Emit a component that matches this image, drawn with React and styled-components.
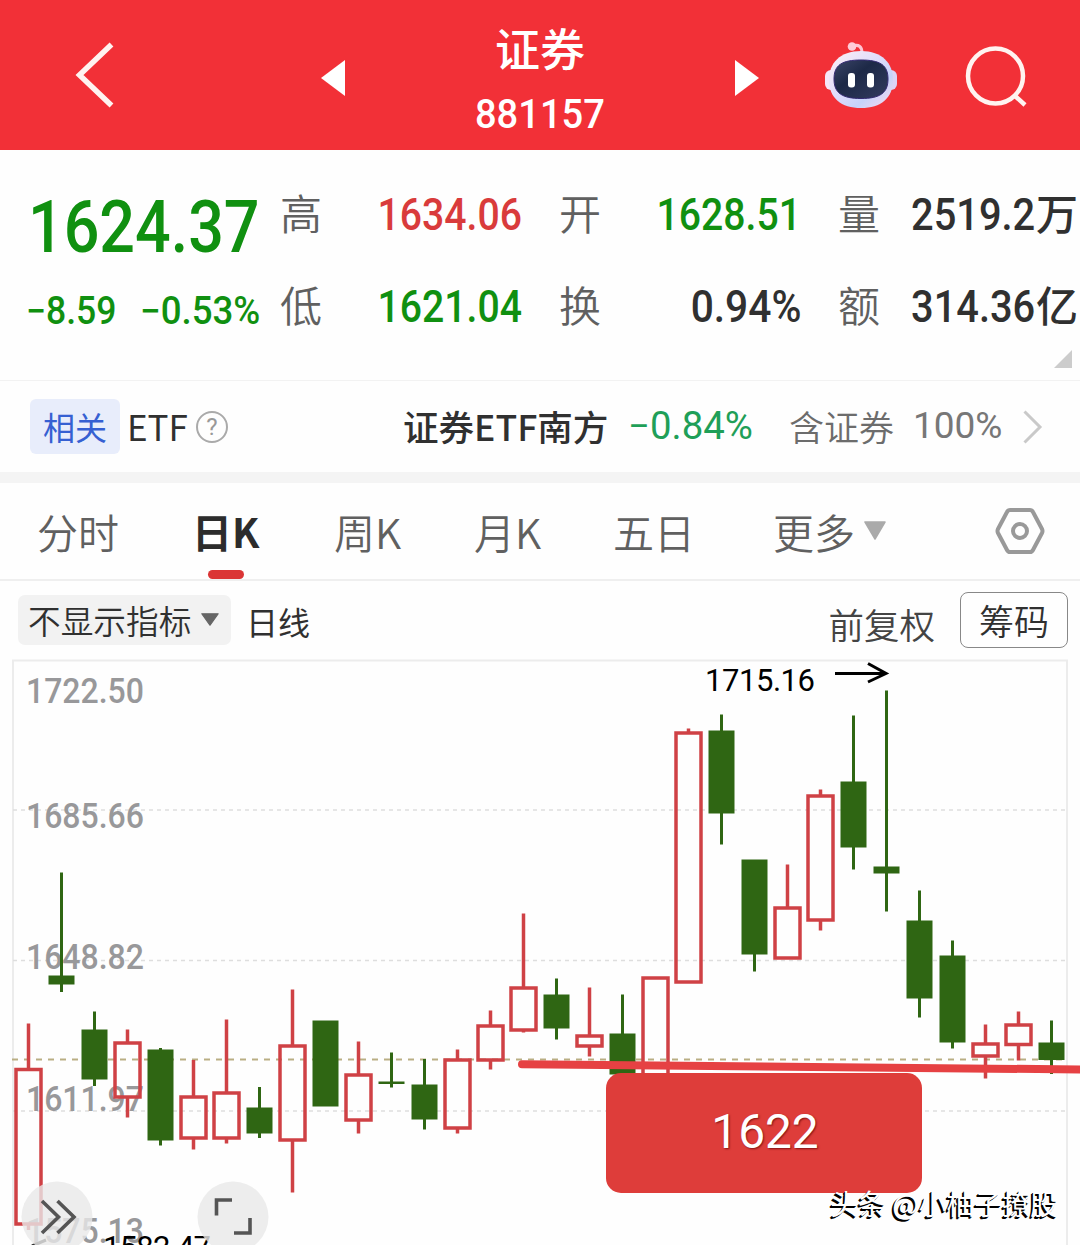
import React from "react";
import styled, { createGlobalStyle } from "styled-components";

const GlobalStyle = createGlobalStyle`
  * { box-sizing: border-box; }
  body { margin: 0; background: #fff; }
  svg { display: block; flex: none; }
`;

const cjk = `"Noto Sans CJK SC", sans-serif`;
const digits = `Roboto, "Noto Sans CJK SC", sans-serif`;
const colors = { up: "#d93b3b", down: "#109010", flat: "#303030" };

const Page = styled.div`
  width: 1080px;
  height: 1245px;
  overflow: hidden;
  background: #fefefe;
  font-family: ${cjk};
  color: #303030;
  white-space: nowrap;
`;

/* condensed numerals */
const Num = styled.span`
  display: block;
  font-family: ${digits};
  font-size: ${(p) => p.$size}px;
  font-weight: ${(p) => p.$weight || 500};
  line-height: 1;
  color: ${(p) => p.$color || "inherit"};
  transform: scaleX(${(p) => p.$fit || 0.87});
  transform-origin: ${(p) => p.$origin || "left"} center;
`;

const Header = styled.header`
  display: grid;
  grid-template-columns: 321px 112px 214px 112px 139px 1fr;
  align-items: center;
  height: 150px;
  background: #f23037;
  color: #fff;
`;
const HeaderCell = styled.div`
  display: flex;
  justify-content: ${(p) => p.$align || "flex-start"};
  padding-left: ${(p) => p.$left || 0}px;
  padding-top: ${(p) => p.$top || 0}px;
`;
const Title = styled.div`
  display: flex;
  flex-direction: column;
  align-items: center;
  height: 150px;
  padding-top: 20px;
`;
const TitleName = styled.div`
  font-size: 45px;
  font-weight: 500;
  line-height: 56px;
  margin-bottom: 18px;
`;

const Quote = styled.section`
  display: grid;
  grid-template-columns: 280px 279px 279px 1fr;
  height: 231px;
  border-bottom: 1.5px solid #f2f2f2;
`;
const PriceBox = styled.div`
  padding: 41px 0 0 28px;
`;
const Changes = styled.div`
  display: flex;
  margin-top: 28px;
`;
const ChangeCell = styled.div`
  width: 116px;
  margin-left: -2px;
`;
const StatColumn = styled.div`
  display: flex;
  flex-direction: column;
  gap: 32px;
  padding-top: 34px;
  position: relative;
`;
const Stat = styled.div`
  display: flex;
  align-items: center;
  justify-content: space-between;
  height: 60px;
  padding-right: ${(p) => (p.$last ? 0 : 37)}px;
`;
const StatLabel = styled.span`
  padding-bottom: 4px;
  font-size: 42px;
  font-weight: 350;
  line-height: 56px;
  color: #606060;
`;
const StatAmount = styled.div`
  display: flex;
  align-items: center;
  width: 169px;
`;
const AmountNumber = styled.div`
  width: 125px;
`;
const AmountUnit = styled.span`
  padding-bottom: 4px;
  font-size: 42px;
  font-weight: 500;
  line-height: 56px;
`;
const Corner = styled.i`
  position: absolute;
  right: 8px;
  bottom: 12px;
  border-left: 18px solid transparent;
  border-bottom: 18px solid #ccc;
`;

const Related = styled.section`
  display: flex;
  align-items: center;
  height: 91px;
  padding-left: 30px;
  font-size: 35px;
`;
const Tag = styled.span`
  width: 90px;
  height: 55px;
  margin-right: 7px;
  border-radius: 6px;
  background: #e8edfb;
  color: #3660d2;
  font-size: 32px;
  line-height: 54px;
  text-align: center;
`;
const EtfLabel = styled.span`
  padding-bottom: 3px;
`;
const Help = styled.span`
  display: flex;
  align-items: center;
  justify-content: center;
  width: 32px;
  height: 32px;
  margin-left: 8px;
  border: 2px solid #aaa;
  border-radius: 50%;
  font: 24px/1 ${digits};
  color: #999;
`;
const EtfName = styled.span`
  width: 225px;
  margin-left: 175px;
  padding-bottom: 3px;
  font-size: 35.6px;
  font-weight: 500;
`;
const EtfChange = styled.span`
  width: 161px;
  padding-bottom: 2px;
`;
const Share = styled.span`
  width: 124px;
  padding-bottom: 2px;
  font-weight: 350;
  color: #6c6c6c;
`;
const ShareValue = styled.span`
  width: 110px;
  padding-bottom: 2px;
`;

const Tabs = styled.nav`
  display: flex;
  height: 109px;
  padding-left: 37px;
  border-top: 11px solid #f4f4f4;
  border-bottom: 2px solid #efefef;
`;
const Tab = styled.div`
  display: flex;
  flex-direction: column;
  width: ${(p) => p.$width}px;
  padding-top: 18px;
  font-size: ${(p) => (p.$active ? 40 : 41)}px;
  line-height: 60px;
  font-weight: ${(p) => (p.$active ? 700 : 350)};
  color: ${(p) => (p.$active ? "#2c2c2c" : "#606060")};
`;
const Underline = styled.i`
  width: 36px;
  height: 10px;
  margin: 9px 0 0 16px;
  border-radius: 5px;
  background: #db3535;
`;
const More = styled.div`
  display: flex;
  align-items: center;
  gap: 9px;
  svg { margin-top: -2px; }
`;
const Settings = styled.div`
  padding-top: 24px;
`;

const Toolbar = styled.div`
  display: flex;
  align-items: center;
  height: 78px;
  padding: 0 12px 0 18px;
`;
const Indicator = styled.div`
  display: flex;
  align-items: center;
  gap: 10px;
  width: 213px;
  height: 50px;
  padding: 0 0 2px 10px;
  border-radius: 7px;
  background: #f2f2f2;
  font-size: 32.7px;
  font-weight: 350;
`;
const Period = styled.span`
  margin-left: 15px;
  padding-top: 1px;
  font-size: 32px;
`;
const Adjust = styled.span`
  margin-left: auto;
  padding-top: 6px;
  font-size: 35.5px;
  font-weight: 350;
  color: #444;
`;
const Chips = styled.button`
  width: 108px;
  height: 56px;
  margin-left: 25px;
  padding: 0;
  border: 1.5px solid #888;
  border-radius: 8px;
  background: transparent;
  font: 350 35px/50px ${cjk};
  color: #303030;
`;

const ChartArea = styled.div`
  position: relative;
  height: 586px;
`;
const Callout = styled.div`
  position: absolute;
  left: 606px;
  top: 414px;
  display: flex;
  align-items: center;
  justify-content: center;
  width: 316px;
  height: 120px;
  padding-left: 2px;
  border-radius: 15px;
  background: #de3d3a;
  color: #fff;
  font: 47.8px/1 ${digits};
  text-shadow: 1px 1px 2px rgba(90, 0, 0, 0.7);
`;
const Watermark = styled.div`
  position: absolute;
  right: 22px;
  bottom: 22px;
  font-size: 27.9px;
  line-height: 40px;
  color: #fff;
  text-shadow: -1px 1px 0 #000, -2px 2px 0 #000;
`;

// [up, high, bodyTop, bodyBottom, low]
const candles = [
  [1, 1023.5, 1068, 1225.5, 1230],
  [0, 872.5, 975.5, 984.5, 992],
  [0, 1011.5, 1029.5, 1079.5, 1086],
  [1, 1029.5, 1041.5, 1098.5, 1117.5],
  [0, 1048, 1049.5, 1140.5, 1145.5],
  [1, 1060, 1095.5, 1139.5, 1149.5],
  [1, 1019.5, 1091.5, 1139.5, 1143.5],
  [0, 1087, 1107.5, 1133.5, 1138],
  [1, 989.5, 1044.5, 1141.5, 1192.5],
  [0, 1020.5, 1020.5, 1106.5, 1106.5],
  [1, 1041.5, 1073.5, 1121.5, 1133.5],
  [0, 1052.5, 1081.5, 1084, 1087.5],
  [0, 1059, 1084.5, 1119.5, 1129.5],
  [1, 1049.5, 1058.5, 1129.5, 1133.5],
  [1, 1010.5, 1024.5, 1061.5, 1069.5],
  [1, 913.5, 986.5, 1031.5, 1032.5],
  [0, 978.5, 994.5, 1028.5, 1039.5],
  [1, 987.5, 1034.5, 1047.5, 1056.5],
  [0, 994.5, 1033.5, 1074.5, 1074.5],
  [1, 976.5, 976.5, 1090, 1090],
  [1, 728.5, 731.5, 983.5, 983.5],
  [0, 714.5, 730.5, 813.5, 844.5],
  [0, 859.5, 859.5, 954.5, 971.5],
  [1, 864.5, 906.5, 959.5, 959.5],
  [1, 789.5, 794.5, 921.5, 930.5],
  [0, 715.5, 781.5, 847.5, 869.5],
  [0, 690.5, 866.5, 873.5, 911.5],
  [0, 890.5, 920.5, 998.5, 1017.5],
  [0, 940.5, 955.5, 1042.5, 1048.5],
  [1, 1024.5, 1042.5, 1057.5, 1078.5],
  [1, 1011.5, 1023.5, 1046, 1060.5],
  [0, 1020.5, 1042.5, 1060, 1074],
];

const scale = [
  ["1722.50", 703],
  ["1685.66", 828],
  ["1648.82", 969],
  ["1611.97", 1111],
  ["1575.13", 1243],
];

function Candle({ index, data }) {
  const [up, high, top, bottom, low] = data;
  const x = 28.5 + index * 33;
  const color = up ? "#cf4145" : "#2f6613";
  return (
    <g stroke={color} strokeWidth={up ? 3.5 : 3}>
      {high < top && <line x1={x} x2={x} y1={high} y2={top + 1} />}
      {low > bottom && <line x1={x} x2={x} y1={bottom - 1} y2={low} />}
      {up ? (
        <rect x={x - 12.5} y={top + 1.5} width="25" height={bottom - top - 3} fill="none" />
      ) : (
        <rect x={x - 13} y={top} width="26" height={bottom - top} fill={color} stroke="none" />
      )}
    </g>
  );
}

function Chart() {
  return (
    <svg width="1080" height="586" viewBox="0 659 1080 586">
      <path d="M13 1245V660.5H1067V1245" fill="none" stroke="#ececec" strokeWidth="2" />
      <g stroke="#dedede" strokeWidth="1.3" strokeDasharray="4 4">
        <path d="M13 810H1067M13 960.5H1067M13 1111H1067" />
      </g>
      <path d="M12 1059.5H1067" stroke="#b9ae83" strokeWidth="1.8" strokeDasharray="6 6" />
      <g fill="#98989a" fontFamily="Roboto, sans-serif" fontSize="35.5" fontWeight="500">
        {scale.map(([label, y]) => (
          <text key={label} x="26" y={y} textLength="118" lengthAdjust="spacingAndGlyphs">
            {label}
          </text>
        ))}
      </g>
      {candles.map((data, i) => (
        <Candle key={i} index={i} data={data} />
      ))}
      <g fontFamily="Roboto, sans-serif" fontSize="31" fill="#000">
        <text x="705" y="691" textLength="110">1715.16</text>
        <text x="103" y="1258" textLength="108">1582.47</text>
      </g>
      <path d="M835 673.5H886M868 663.5L886 673.5L868 682" fill="none" stroke="#000" strokeWidth="3" />
      <path d="M32 1246L46 1240" stroke="#333" strokeWidth="3" />
      <g fill="#e9e9e9" fillOpacity=".8">
        <circle cx="57" cy="1217" r="35.5" />
        <circle cx="233" cy="1217" r="35.5" />
      </g>
      <g fill="none" stroke="#555" strokeWidth="3.6">
        <path d="M42 1201L58.5 1217L42 1233M57.5 1201L74 1217L57.5 1233" />
        <path d="M216.5 1215.5V1200H232M250 1218V1233H234" />
      </g>
      <path d="M522 1064.3L1084 1069.5" stroke="#e64143" strokeWidth="8" strokeLinecap="round" />
    </svg>
  );
}

function Robot() {
  return (
    <svg width="74" height="70" viewBox="824 41 74 70">
      <defs>
        <linearGradient id="shell" x1="0" y1="0" x2="1" y2="1">
          <stop offset="0" stopColor="#fff0f5" />
          <stop offset=".45" stopColor="#dfdcfb" />
          <stop offset=".7" stopColor="#c6d2fa" />
          <stop offset="1" stopColor="#fbd9ee" />
        </linearGradient>
        <linearGradient id="visor" x1="0" y1="0" x2="1" y2="1">
          <stop offset="0" stopColor="#3b4568" />
          <stop offset=".4" stopColor="#1d2947" />
          <stop offset="1" stopColor="#323b5f" />
        </linearGradient>
      </defs>
      <path d="M853 46C859 44 862 47 862 53" fill="none" stroke="#ffc5d3" strokeWidth="3" />
      <circle cx="852" cy="46.500" r="4.300" fill="#ffcbd7" />
      <rect x="825" y="70" width="12" height="20" rx="6" fill="#f6e6f8" />
      <rect x="885" y="70" width="12" height="20" rx="6" fill="#dcd3f7" />
      <path d="M861 51C882 51 893 63 893 80C893 98 881 108 861 108C841 108 829 98 829 80C829 63 840 51 861 51Z" fill="url(#shell)" />
      <path d="M861 60C880 60 888 65 888 79C888 93 880 98.5 861 98.5C842 98.5 834 93 834 79C834 65 842 60 861 60Z" fill="url(#visor)" stroke="#342a72" />
      <rect x="848" y="73" width="7" height="14.5" rx="3" fill="#fff" />
      <rect x="867" y="73" width="7" height="14.5" rx="3" fill="#fff" />
    </svg>
  );
}

function Down({ width, height, color }) {
  return (
    <svg width={width} height={height} viewBox="0 0 22 19" preserveAspectRatio="none">
      <path d="M1 1H21L11 18Z" fill={color} stroke={color} strokeWidth="1.5" strokeLinejoin="round" />
    </svg>
  );
}

function StatRow({ label, value, color, fit }) {
  return (
    <Stat>
      <StatLabel>{label}</StatLabel>
      <Num $size={45} $fit={fit} $color={color} $origin="right">{value}</Num>
    </Stat>
  );
}

function AmountRow({ label, value, unit }) {
  return (
    <Stat $last>
      <StatLabel>{label}</StatLabel>
      <StatAmount>
        <AmountNumber>
          <Num $size={45} $fit={0.885}>{value}</Num>
        </AmountNumber>
        <AmountUnit>{unit}</AmountUnit>
      </StatAmount>
    </Stat>
  );
}

export default function App() {
  return (
    <Page>
      <GlobalStyle />
      <Header>
        <HeaderCell $left={75}>
          <svg width="40" height="68" viewBox="75 41 40 68">
            <path d="M111.5 44.5L79.5 75L111.5 105.5" fill="none" stroke="#fff3f0" strokeWidth="5.5" />
          </svg>
        </HeaderCell>
        <HeaderCell $top={5}>
          <svg width="24" height="36"><path d="M0 18L24 0V36Z" fill="#fff" /></svg>
        </HeaderCell>
        <Title>
          <TitleName>证券</TitleName>
          <Num $size={41} $fit={0.93} $origin="center">881157</Num>
        </Title>
        <HeaderCell $align="flex-end" $top={5}>
          <svg width="24" height="36"><path d="M24 18L0 0V36Z" fill="#fff" /></svg>
        </HeaderCell>
        <HeaderCell $align="flex-end" $top={2}>
          <Robot />
        </HeaderCell>
        <HeaderCell $left={67} $top={4}>
          <svg width="64" height="62" viewBox="964 46 64 62">
            <circle cx="994.5" cy="76" r="27.5" fill="none" stroke="#fff3f0" strokeWidth="4.5" />
            <path d="M1013 95L1024 105" stroke="#fff3f0" strokeWidth="4.5" />
          </svg>
        </HeaderCell>
      </Header>

      <Quote>
        <PriceBox>
          <Num $size={73} $fit={0.86} $color={colors.down}>1624.37</Num>
          <Changes>
            <ChangeCell><Num $size={38} $color={colors.down} $fit={0.935}>−8.59</Num></ChangeCell>
            <ChangeCell><Num $size={38} $color={colors.down} $fit={0.965}>−0.53%</Num></ChangeCell>
          </Changes>
        </PriceBox>
        <StatColumn>
          <StatRow label="高" value="1634.06" color={colors.up} />
          <StatRow label="低" value="1621.04" color={colors.down} />
        </StatColumn>
        <StatColumn>
          <StatRow label="开" value="1628.51" color={colors.down} />
          <StatRow label="换" value="0.94%" color={colors.flat} fit={0.905} />
        </StatColumn>
        <StatColumn>
          <AmountRow label="量" value="2519.2" unit="万" />
          <AmountRow label="额" value="314.36" unit="亿" />
          <Corner />
        </StatColumn>
      </Quote>

      <Related>
        <Tag>相关</Tag>
        <EtfLabel>ETF</EtfLabel>
        <Help>?</Help>
        <EtfName>证券ETF南方</EtfName>
        <EtfChange><Num $size={38} $weight={400} $color="#1f9f58" $fit={1.01}>−0.84%</Num></EtfChange>
        <Share>含证券</Share>
        <ShareValue><Num $size={37} $weight={400} $color="#777" $fit={1}>100%</Num></ShareValue>
        <svg width="20" height="34">
          <path d="M1.5 1.5L17 17L1.5 32.5" fill="none" stroke="#c9c9c9" strokeWidth="3" />
        </svg>
      </Related>

      <Tabs>
        <Tab $width={155}>分时</Tab>
        <Tab $width={142} $active>日K<Underline /></Tab>
        <Tab $width={140}>周K</Tab>
        <Tab $width={139}>月K</Tab>
        <Tab $width={160}>五日</Tab>
        <Tab $width={222}>
          <More>更多<Down width={22} height={19} color="#aaa" /></More>
        </Tab>
        <Settings>
          <svg width="50" height="48" viewBox="0 0 50 48" fill="none" stroke="#999" strokeWidth="4">
            <path d="M15 3H35Q37 3 38 5L47 22Q48 24 47 26L38 43Q37 45 35 45H15Q13 45 12 43L3 26Q2 24 3 22L12 5Q13 3 15 3Z" />
            <circle cx="25" cy="24" r="7" />
          </svg>
        </Settings>
      </Tabs>

      <Toolbar>
        <Indicator>
          不显示指标
          <Down width={18} height={13} color="#666" />
        </Indicator>
        <Period>日线</Period>
        <Adjust>前复权</Adjust>
        <Chips>筹码</Chips>
      </Toolbar>

      <ChartArea>
        <Chart />
        <Callout>1622</Callout>
        <Watermark>头条 @小柚子撩股</Watermark>
      </ChartArea>
    </Page>
  );
}
